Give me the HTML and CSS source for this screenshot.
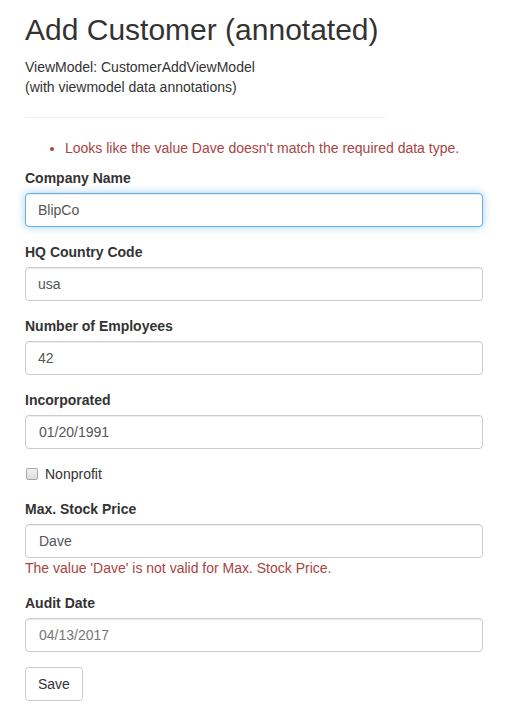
FILE: index.html
```html
<!DOCTYPE html>
<html lang="en">
<head>
<meta charset="utf-8">
<title>Add Customer (annotated)</title>
<link rel="stylesheet" href="styles.css">
</head>
<body>
<div class="container">
  <h2 class="title">Add Customer (annotated)</h2>
  <p class="subtitle">ViewModel: CustomerAddViewModel<br>(with viewmodel data annotations)</p>
  <hr class="divider">
  <form class="form">
    <ul class="summary">
      <li>Looks like the value Dave doesn't match the required data type.</li>
    </ul>
    <div class="group">
      <label class="label">Company Name</label>
      <input class="control focused" type="text" value="BlipCo">
    </div>
    <div class="group">
      <label class="label">HQ Country Code</label>
      <input class="control" type="text" value="usa">
    </div>
    <div class="group">
      <label class="label">Number of Employees</label>
      <input class="control" type="text" value="42">
    </div>
    <div class="group">
      <label class="label">Incorporated</label>
      <input class="control date" type="text" value="01/20/1991">
    </div>
    <div class="group">
      <label class="check"><input class="checkbox" type="checkbox"> Nonprofit</label>
    </div>
    <div class="group">
      <label class="label">Max. Stock Price</label>
      <input class="control date" type="text" value="Dave">
      <span class="field-error">The value 'Dave' is not valid for Max. Stock Price.</span>
    </div>
    <div class="group">
      <label class="label">Audit Date</label>
      <input class="control date muted" type="text" value="04/13/2017">
    </div>
    <button class="btn" type="button">Save</button>
  </form>
</div>
</body>
</html>
```
FILE: styles.css
```css
* { box-sizing: border-box; }
body {
  margin: 0;
  font-family: "Liberation Sans", Arial, Helvetica, sans-serif;
  font-size: 14px;
  line-height: 20px;
  color: #333;
  background: #fff;
}
.container {
  padding: 0 25px;
}
.title {
  margin: 13px 0 11px;
  font-size: 30px;
  line-height: 33px;
  font-weight: 400;
  color: #333;
}
.subtitle {
  margin: 0;
}
.divider {
  width: 360px;
  margin: 20px 0;
  border: 0;
  border-top: 1px solid #eee;
  height: 0;
}
.form {
  width: 458px;
}
.summary {
  margin: 0 0 10px;
  padding-left: 40px;
  color: #a94442;
}
.group {
  margin-bottom: 15px;
}
.label {
  display: block;
  font-weight: 700;
  margin-bottom: 5px;
}
.control {
  display: block;
  width: 100%;
  height: 34px;
  padding: 6px 12px;
  font-family: inherit;
  font-size: 14px;
  line-height: 20px;
  color: #555;
  background: #fff;
  border: 1px solid #ccc;
  border-radius: 4px;
  box-shadow: inset 0 1px 1px rgba(0,0,0,.075);
  outline: none;
}
.control.date { padding-left: 13px; }
.control.focused {
  border-color: #66afe9;
  box-shadow: inset 0 1px 1px rgba(0,0,0,.075), 0 0 8px rgba(102,175,233,.6);
}
.control.muted { color: #777; }
.check {
  display: flex;
  align-items: center;
  gap: 7px;
  font-weight: 400;
  min-height: 20px;
}
.checkbox {
  -webkit-appearance: none;
  appearance: none;
  margin: 0 0 0 1px;
  width: 12px;
  height: 12px;
  border: 1px solid #a6a6a6;
  border-radius: 2px;
  background: linear-gradient(#f2f2f2, #dcdcdc);
}
.field-error {
  display: block;
  color: #a94442;
}
.btn {
  display: inline-block;
  height: 34px;
  padding: 6px 12px;
  font-family: inherit;
  font-size: 14px;
  line-height: 20px;
  color: #333;
  background: #fff;
  border: 1px solid #ccc;
  border-radius: 4px;
}
```
